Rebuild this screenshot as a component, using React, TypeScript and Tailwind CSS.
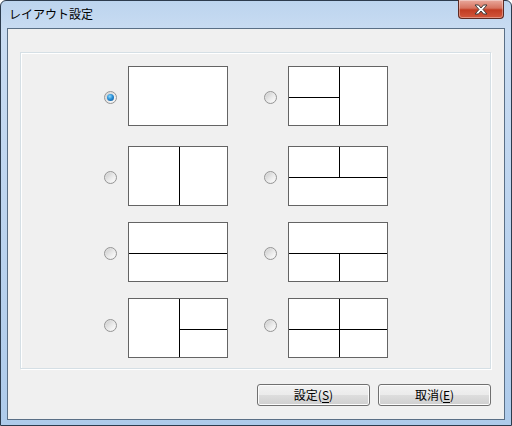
import React from 'react';

const layouts: string[][] = [
    ['full', 'hLeft'],
    ['v', 'vTop'],
    ['h', 'vBottom'],
    ['hRight', 'grid'],
];

// preview of a screen split, drawn as a tiny diagram
const LayoutPreview: React.FC<{ kind: string }> = ({ kind }) => {
    const v = (y1: number, y2: number) => <line x1="51.5" y1={y1} x2="51.5" y2={y2} stroke="#000" strokeWidth="1" />;
    const h = (x1: number, x2: number) => <line x1={x1} y1="31.5" x2={x2} y2="31.5" stroke="#000" strokeWidth="1" />;
    return (
        <svg width="100" height="60" viewBox="0 0 100 60" className="block shrink-0">
            <rect x="0.5" y="0.5" width="99" height="59" fill="#fff" stroke="#646464" strokeWidth="1" />
            {kind === 'hLeft' && <>{v(1, 59)}{h(1, 51)}</>}
            {kind === 'v' && v(1, 59)}
            {kind === 'h' && h(1, 99)}
            {kind === 'vTop' && <>{v(1, 31)}{h(1, 99)}</>}
            {kind === 'vBottom' && <>{v(32, 59)}{h(1, 99)}</>}
            {kind === 'hRight' && <>{v(1, 59)}{h(52, 99)}</>}
            {kind === 'grid' && <>{v(1, 59)}{h(1, 99)}</>}
        </svg>
    );
};

const Radio: React.FC<{ checked?: boolean }> = ({ checked }) => (
    <div className="w-[13px] h-[13px] shrink-0 rounded-full border border-[#959595] bg-gradient-to-br from-[#d9d9d9] to-[#f8f8f8] flex items-center justify-center">
        <div className="w-[9px] h-[9px] rounded-full bg-gradient-to-br from-[#cdcdcd] via-[#e8e8e8] to-[#fdfdfd] flex items-center justify-center">
            {checked && <div className="w-[7px] h-[7px] rounded-full bg-[radial-gradient(circle_at_40%_35%,#8fdcff_0%,#2a8fd6_45%,#0d4f8e_100%)]" />}
        </div>
    </div>
);

const Button: React.FC<{ label: string; hot: string }> = ({ label, hot }) => (
    <div className="w-[113px] h-[22px] rounded-[3px] border border-[#707070] bg-[linear-gradient(#f2f2f2_0%,#ebebeb_50%,#dddddd_51%,#cfcfcf_100%)] shadow-[inset_0_0_0_1px_#fcfcfc] flex items-center justify-center text-[12px] text-black leading-none">
        {label}(<span className="underline underline-offset-2">{hot}</span>)
    </div>
);

export default function App() {
    return (
        <div
            className="w-[512px] h-[426px] border border-[#2c3b4d] rounded-t-[6px] bg-[linear-gradient(180deg,#bcd4ee_0px,#c9dcf2_30px,#aecbeb_100%)] flex flex-col"
            style={{ fontFamily: '"Noto Sans CJK JP", "Noto Sans", sans-serif' }}
        >
            <div className="h-[27px] flex items-start justify-between pl-[8px] pr-[7px]">
                <span className="mt-[5px] text-[12px] leading-[16px] text-black">レイアウト設定</span>
                <div className="w-[46px] h-[19px] mt-[-1px] rounded-b-[4px] border border-[#5e2a22] border-t-0 bg-[linear-gradient(#e9a99d_0%,#d6735f_45%,#c13c22_55%,#d2573c_100%)] shadow-[inset_0_0_0_1px_rgba(255,255,255,0.35)] flex items-center justify-center">
                    <svg width="16" height="11" viewBox="0 0 16 11">
                        <path d="M2 1 H5.5 L8 4 L10.5 1 H14 L10 5.5 L14 10 H10.5 L8 7 L5.5 10 H2 L6 5.5 Z" fill="#fff" stroke="#3b3b3b" strokeWidth="1" strokeLinejoin="round" />
                    </svg>
                </div>
            </div>
            <div className="flex-1 px-[6px] pb-[5px] flex">
                <div className="flex-1 border border-[#5a6f86] bg-[#f0f0f0] pt-[23px] pl-[12px] pr-[13px] flex flex-col">
                    <div className="w-[471px] h-[317px] border border-[#d5dfe5] shadow-[inset_1px_1px_0_#fff,1px_1px_0_#fff] pt-[13px] pl-[83px] flex flex-col gap-[16px]">
                        {layouts.map((row, i) => (
                            <div key={i} className={`flex items-center gap-[36px] ${i === 1 ? 'mt-[4px]' : ''}`}>
                                {row.map((kind, j) => (
                                    <div key={j} className="flex items-center gap-[11px]">
                                        <div className={i === 3 ? 'pb-[6px]' : 'pt-[3px]'}><Radio checked={i === 0 && j === 0} /></div>
                                        <LayoutPreview kind={kind} />
                                    </div>
                                ))}
                            </div>
                        ))}
                    </div>
                    <div className="mt-[15px] flex justify-end gap-[8px]">
                        <Button label="設定" hot="S" />
                        <Button label="取消" hot="E" />
                    </div>
                </div>
            </div>
        </div>
    );
}
